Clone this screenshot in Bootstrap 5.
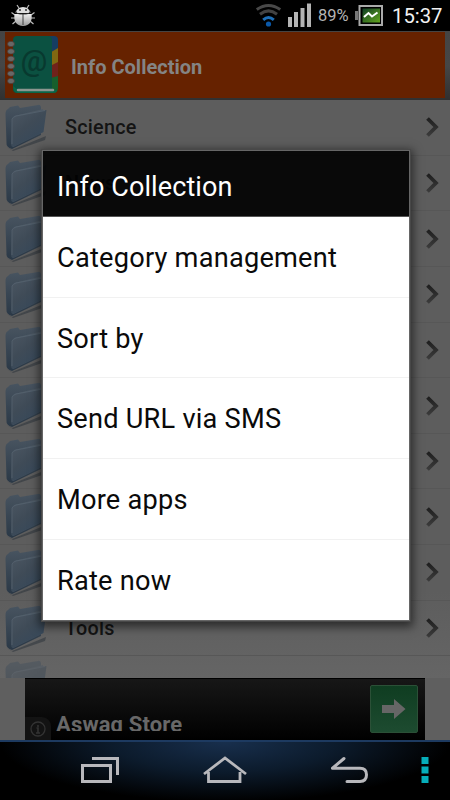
<!DOCTYPE html>
<html lang="en">
<head>
<meta charset="utf-8">
<meta name="viewport" content="width=device-width, initial-scale=1">
<title>Info Collection</title>
<link href="https://cdn.jsdelivr.net/npm/bootstrap@5.3.0/dist/css/bootstrap.min.css" rel="stylesheet">
<style>
body{width:450px;height:800px;background:#000;font-family:Roboto,"Liberation Sans",sans-serif}
svg{display:block;flex:none}
.status{height:31px;color:#b4b4b4}
.bug{margin-left:10px}
.bars{margin-left:7px}
.battery{margin-left:4px}
.pct{font-size:16.5px;line-height:34px;margin-left:7px;width:33px}
.clock{font-size:20.3px;line-height:34px;color:#f2f2f2;margin-left:8px;white-space:nowrap;width:58px}
.app-head{height:69px;padding:1px 5px 2px;background:linear-gradient(#444,#464646 50%,#303030)}
.app-bar{background:#662200;color:#848484;font-size:20px;font-weight:700}
.app-bar span{margin-left:13px;padding-top:3px}
.rows{height:578px;background:linear-gradient(#5d5d5d 85%,#656565)}
.entry{height:55.65px;flex:none;padding:0 10px 0 5px;border-bottom:1px solid #575757;color:#141414;font-size:19.8px;font-weight:500;letter-spacing:.25px}
.entry span{margin-left:18px;padding-top:2px}
.entry svg:first-child{margin-top:1px}
.ad-zone{height:62px;background:#5f5f5f;padding:0 25px}
.ad{background:linear-gradient(#171717,#000);border-top:1px solid #000}
.info-tab{width:26px;height:23px;background:#131313;border-top-right-radius:9px}
.ad-name{font-size:22px;font-weight:700;line-height:22px;height:17px;letter-spacing:.15px;color:#686868;margin:0 0 9px 5px}
.go{width:48px;height:48px;background:linear-gradient(#0f3d21,#1d4b30);border:1px solid #2b5037;border-radius:2px;margin:6px 7px 0 0}
.nav-keys{height:60px;border-top:2px solid #1d3a60;background:radial-gradient(ellipse 225px 60px at 50% 0,#182f4d 0,#0c1b2c 50%,#000 100%),#000}
.menu-box{left:42px;top:150px;width:368px;height:471px;border:1px solid #666;outline:1px solid #484848;box-shadow:0 3px 9px 3px rgba(0,0,0,.55)}
.menu-title{height:66px;background:rgba(0,0,0,.9);color:#fff;border-bottom:1px solid #555;font-size:27px;letter-spacing:.1px;padding:8px 14px 0}
.menu-item{height:80.7px;flex:none;background:#fff;color:#0a0a0a;font-size:27.2px;letter-spacing:.22px;padding:3px 14px 0;border-bottom:1px solid #f1f1f1}
.menu-item:last-child{border:0}
</style>
<script src="https://cdn.jsdelivr.net/npm/bootstrap@5.3.0/dist/js/bootstrap.bundle.min.js"></script>
</head>
<body class="position-relative overflow-hidden d-flex flex-column">
<svg width="0" height="0" class="position-absolute">
<defs>
<linearGradient id="fold" x1="0" y1="0" x2=".7" y2="1"><stop offset="0" stop-color="#4c5763"/><stop offset=".5" stop-color="#3f4b57"/><stop offset="1" stop-color="#35485b"/></linearGradient>
<linearGradient id="foldBack" x1="0" y1="0" x2="0" y2="1"><stop offset="0" stop-color="#485460"/><stop offset="1" stop-color="#2a3846"/></linearGradient>
<symbol id="folder" viewBox="0 0 42 48">
<path d="M2 43 7 46 41 32 40 36 8 47Z" fill="#222a33" opacity=".45"/>
<path d="M.5 10Q.5 6 3 5L5 3 13 1.500 15 4 33 1Q35 0 36 3V31L7 45Q1 43 1.500 39Z" fill="url(#foldBack)"/>
<path d="M9 12 38 5V28L8 43Z" fill="#4e5964"/>
<path d="M7 16Q7 13 10 12L35 7 41.500 6 38.500 28 8 43Q6 43 6 39Z" fill="url(#fold)"/>
<path d="M7 40V15Q8 13 11 12L40 6.500" fill="none" stroke="#566370" stroke-width=".8"/>
</symbol>
<linearGradient id="chevG" x1="0" y1="0" x2="0" y2="1"><stop offset="0" stop-color="#1f1f1f"/><stop offset="1" stop-color="#3b3b3b"/></linearGradient>
<symbol id="chev" viewBox="0 0 15 22"><path d="M2.500 2.500 11 11 2.500 19.500" fill="none" stroke="url(#chevG)" stroke-width="3.800"/></symbol>
<linearGradient id="bugG" x1="0" y1="0" x2="0" y2="1"><stop offset="0" stop-color="#eee"/><stop offset="1" stop-color="#999"/></linearGradient>
<linearGradient id="bat" x1="0" y1="0" x2="1" y2="1"><stop offset="0" stop-color="#103e25"/><stop offset="1" stop-color="#62a61d"/></linearGradient>
</defs>
</svg>

<header class="status d-flex align-items-center flex-shrink-0">
<svg class="bug" width="26" height="31" viewBox="0 0 26 31"><g stroke="#bbb" stroke-width="1.200" fill="none"><path d="M9 8 7 5M17 8 19 5M5 15 1.500 12.500M21 15 24.500 12.500M5 18H1M21 18H25M6 21 2.500 24M20 21 23.500 24"/></g><path d="M5.500 13Q7 7 13 7T20.500 13Z" fill="#ddd"/><path d="M4.500 14H21.500Q23 25.500 13 26Q3 25.500 4.500 14Z" fill="url(#bugG)"/><path d="M5.500 11Q6 14 10 14H16Q20 14 20.500 11M13 14V25" fill="none" stroke="#333" stroke-width=".9"/><circle cx="10" cy="10" r=".9" fill="#222"/><circle cx="16" cy="10" r=".9" fill="#222"/></svg>
<svg class="ms-auto" width="25" height="31" viewBox="0 0 25 31"><g fill="none" stroke-width="3"><path d="M.8 9.600Q12.500 1.500 24.200 9.600" stroke="#484848"/><path d="M4 14.200Q12.500 7.500 21 14.200" stroke="#424242"/><path d="M7.200 19.800Q12.500 15.300 17.800 19.800" stroke="#1e6fb8"/></g><circle cx="12.500" cy="24" r="2.600" fill="#0a58a8"/></svg>
<svg class="bars" width="23" height="31" viewBox="0 0 23 31" fill="#b4b4b4"><path d="M0 17h4v10H0zM6 12h4v15H6zM12.500 8h4v19h-4zM19 3.500h4V27h-4z"/></svg>
<span class="pct">89%</span>
<svg class="battery" width="29" height="31" viewBox="0 0 29 31"><path d="M0 11h3v9H0z" fill="#777"/><path d="M4.500 6h22.500v19H4.500z" fill="none" stroke="#aaa" stroke-width="2"/><path d="M7.500 8.500h17.500v14h-17.500z" fill="url(#bat)"/><path d="M9 17 13.500 13 17 16.500 22.500 12.500" fill="none" stroke="#fff" stroke-width="2"/></svg>
<span class="clock">15:37</span>
</header>

<section class="app-head flex-shrink-0 d-flex">
<div class="app-bar flex-grow-1 d-flex align-items-center">
<svg width="53" height="66" viewBox="0 0 53 66"><path d="M40 4h9q4 0 4 4v12H40z" fill="#163d62"/><path d="M43 22 53 16v20l-10 3z" fill="#806811"/><path d="M45 34 53 30v18l-8 3z" fill="#70221b"/><path d="M42 47 53 44v12q0 5-5 5h-6z" fill="#175f2c"/><path d="M12 4h31q4 0 4 4v50q0 3-4 3H12q-4 0-4-4V8q0-4 4-4Z" fill="#0b5141"/><path d="M8 54q0 7 5 7h35q4 0 4-3H13z" fill="#096548"/><path d="M13 58h35" stroke="#8c9690" stroke-width="2.500" stroke-linecap="round"/><text x="29" y="39" text-anchor="middle" font-family="Roboto,sans-serif" font-size="29.500" font-weight="500" fill="#08392f">@</text><g fill="#686868" stroke="#4b3830" stroke-width=".7"><ellipse cx="6" cy="12" rx="3.500" ry="2.700"/><ellipse cx="6" cy="19.400" rx="3.500" ry="2.700"/><ellipse cx="6" cy="26.800" rx="3.500" ry="2.700"/><ellipse cx="6" cy="34.200" rx="3.500" ry="2.700"/><ellipse cx="6" cy="41.600" rx="3.500" ry="2.700"/><ellipse cx="6" cy="49" rx="3.500" ry="2.700"/></g></svg>
<span>Info Collection</span>
</div>
</section>

<main class="rows flex-shrink-0 overflow-hidden d-flex flex-column">
<div class="entry d-flex align-items-center"><svg width="42" height="48"><use href="#folder"/></svg><span>Science</span><svg class="ms-auto" width="15" height="22"><use href="#chev"/></svg></div>
<div class="entry d-flex align-items-center"><svg width="42" height="48"><use href="#folder"/></svg><span>News</span><svg class="ms-auto" width="15" height="22"><use href="#chev"/></svg></div>
<div class="entry d-flex align-items-center"><svg width="42" height="48"><use href="#folder"/></svg><svg class="ms-auto" width="15" height="22"><use href="#chev"/></svg></div>
<div class="entry d-flex align-items-center"><svg width="42" height="48"><use href="#folder"/></svg><svg class="ms-auto" width="15" height="22"><use href="#chev"/></svg></div>
<div class="entry d-flex align-items-center"><svg width="42" height="48"><use href="#folder"/></svg><svg class="ms-auto" width="15" height="22"><use href="#chev"/></svg></div>
<div class="entry d-flex align-items-center"><svg width="42" height="48"><use href="#folder"/></svg><svg class="ms-auto" width="15" height="22"><use href="#chev"/></svg></div>
<div class="entry d-flex align-items-center"><svg width="42" height="48"><use href="#folder"/></svg><svg class="ms-auto" width="15" height="22"><use href="#chev"/></svg></div>
<div class="entry d-flex align-items-center"><svg width="42" height="48"><use href="#folder"/></svg><svg class="ms-auto" width="15" height="22"><use href="#chev"/></svg></div>
<div class="entry d-flex align-items-center"><svg width="42" height="48"><use href="#folder"/></svg><svg class="ms-auto" width="15" height="22"><use href="#chev"/></svg></div>
<div class="entry d-flex align-items-center"><svg width="42" height="48"><use href="#folder"/></svg><span>Tools</span><svg class="ms-auto" width="15" height="22"><use href="#chev"/></svg></div>
<div class="entry d-flex align-items-center"><svg width="42" height="48" opacity=".5"><use href="#folder"/></svg></div>
</main>

<section class="ad-zone flex-shrink-0 d-flex">
<div class="ad flex-grow-1 d-flex align-items-end">
<div class="info-tab d-flex align-items-center justify-content-center"><svg width="16" height="16" viewBox="0 0 16 16"><circle cx="8" cy="8" r="7" fill="none" stroke="#333" stroke-width="1.300"/><path d="M8 4v2M6.500 7H8v5M6 12h4" fill="none" stroke="#333" stroke-width="1.600"/></svg></div>
<div class="ad-name overflow-hidden">Aswaq Store</div>
<div class="go ms-auto align-self-start d-flex align-items-center justify-content-center"><svg width="24" height="20" viewBox="0 0 24 20"><path d="M0 6h12V0l11.500 10L12 20v-6H0z" fill="#666"/></svg></div>
</div>
</section>

<nav class="nav-keys flex-shrink-0">
<svg width="450" height="58" viewBox="0 742 450 58" fill="none" stroke="#b8b8bc" stroke-width="3"><path d="M82.500 765.500h28v16h-28zM92 758.500h25.500V775"/><path d="M204 774 225 758 246 774M208.500 772v9.500h31.500V772" stroke-width="2.800"/><path d="M344 758.500 332.500 768.200H360q6.500 0 6.500 6.600t-6.500 6.700h-13" stroke-linecap="round" stroke-linejoin="round"/><path d="M421.500 757h7v7h-7zM421.500 766.500h7v7h-7zM421.500 776h7v7h-7z" fill="#06aeba" stroke="none"/></svg>
</nav>

<div class="menu-box position-absolute d-flex flex-column overflow-hidden" role="dialog">
<div class="menu-title d-flex align-items-center flex-shrink-0">Info Collection</div>
<div class="menu-item d-flex align-items-center">Category management</div>
<div class="menu-item d-flex align-items-center">Sort by</div>
<div class="menu-item d-flex align-items-center">Send URL via SMS</div>
<div class="menu-item d-flex align-items-center">More apps</div>
<div class="menu-item d-flex align-items-center">Rate now</div>
</div>
</body>
</html>
